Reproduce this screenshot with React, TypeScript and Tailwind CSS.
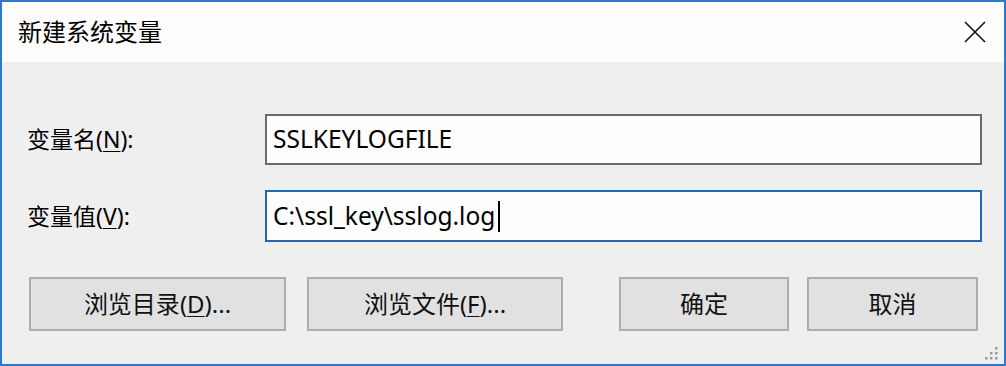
import React from "react";

const font = "font-['Noto_Sans','Noto_Sans_CJK_SC',sans-serif]";

function CloseIcon() {
  return (
    <svg width="24" height="24" viewBox="0 0 24 24" className="block">
      <path d="M2 2 L22 22 M22 2 L2 22" stroke="#111" strokeWidth="1.6" fill="none" />
    </svg>
  );
}

function Grip() {
  const dots = [
    [10, 0],
    [5, 5],
    [10, 5],
    [0, 10],
    [5, 10],
    [10, 10],
  ];
  return (
    <svg width="13" height="13" viewBox="0 0 13 13" className="block">
      {dots.map(([x, y]) => (
        <rect key={`${x}-${y}`} x={x} y={y} width="2.5" height="2.5" fill="#9a9a9a" />
      ))}
    </svg>
  );
}

function Mnemonic({ label, letter, suffix }: { label: string; letter: string; suffix: string }) {
  return (
    <>
      {label}(<span className="underline underline-offset-[3px] decoration-1">{letter}</span>){suffix}
    </>
  );
}

function DialogButton({
  children,
  className,
}: {
  children: React.ReactNode;
  className: string;
}) {
  return (
    <button
      className={`h-[54px] border-2 border-[#adadad] bg-[#e1e1e1] text-[24px] text-[#111] flex items-center justify-center ${className}`}
    >
      {children}
    </button>
  );
}

export default function App() {
  return (
    <div
      className={`relative w-[1006px] h-[366px] border-2 border-[#2a7ad2] flex flex-col bg-[#f0eff0] text-black ${font}`}
    >
      <div className="h-[60px] bg-[#fdfdfd] flex items-center justify-between pl-[16px] pr-[17px]">
        <span className="text-[24px] leading-none">新建系统变量</span>
        <CloseIcon />
      </div>

      <div className="flex-1 pt-[52px] pl-[25px] pr-[22px]">
        <div className="grid grid-cols-[238px_1fr] gap-y-[25px] items-center">
          <label className="text-[23px] leading-none">
            <Mnemonic label="变量名" letter="N" suffix=":" />
          </label>
          <div className="h-[51px] border-2 border-[#6b6b6b] bg-[#fdfdfd] flex items-center px-[6px] text-[24.5px]">
            SSLKEYLOGFILE
          </div>
          <label className="text-[23px] leading-none">
            <Mnemonic label="变量值" letter="V" suffix=":" />
          </label>
          <div className="h-[52px] border-2 border-[#2367b0] bg-[#fdfdfd] flex items-center px-[6px] text-[24.5px]">
            C:\ssl_key\sslog.log
            <span className="inline-block w-[2px] h-[31px] bg-black ml-[3px]" />
          </div>
        </div>

        <div className="flex mt-[35px] pl-[2px]">
          <DialogButton className="w-[257px]">
            <Mnemonic label="浏览目录" letter="D" suffix="..." />
          </DialogButton>
          <DialogButton className="w-[256px] ml-[21px]">
            <Mnemonic label="浏览文件" letter="F" suffix="..." />
          </DialogButton>
          <DialogButton className="w-[170px] ml-[56px]">确定</DialogButton>
          <DialogButton className="w-[171px] ml-[18px]">取消</DialogButton>
        </div>
      </div>

      <div className="absolute right-[6px] bottom-[4px]">
        <Grip />
      </div>
    </div>
  );
}
